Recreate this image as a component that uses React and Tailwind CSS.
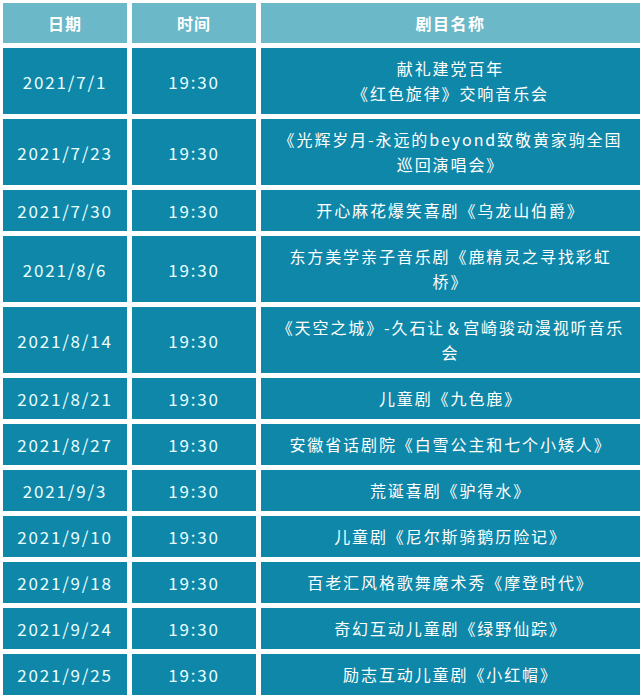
const rows = [
  { date: '2021/7/1', title: ['献礼建党百年', '《红色旋律》交响音乐会'] },
  { date: '2021/7/23', title: ['《光辉岁月-永远的beyond致敬黄家驹全国', '巡回演唱会》'] },
  { date: '2021/7/30', title: ['开心麻花爆笑喜剧《乌龙山伯爵》'] },
  { date: '2021/8/6', title: ['东方美学亲子音乐剧《鹿精灵之寻找彩虹', '桥》'] },
  { date: '2021/8/14', title: ['《天空之城》-久石让＆宫崎骏动漫视听音乐', '会'] },
  { date: '2021/8/21', title: ['儿童剧《九色鹿》'] },
  { date: '2021/8/27', title: ['安徽省话剧院《白雪公主和七个小矮人》'] },
  { date: '2021/9/3', title: ['荒诞喜剧《驴得水》'] },
  { date: '2021/9/10', title: ['儿童剧《尼尔斯骑鹅历险记》'] },
  { date: '2021/9/18', title: ['百老汇风格歌舞魔术秀《摩登时代》'] },
  { date: '2021/9/24', title: ['奇幻互动儿童剧《绿野仙踪》'] },
  { date: '2021/9/25', title: ['励志互动儿童剧《小红帽》'] },
];

const font = { fontFamily: '"Microsoft YaHei", "Noto Sans CJK SC", sans-serif' };

export default function App() {
  return (
    <div className="w-[644px] h-[699px] bg-white pt-[3px] pl-[3px] pr-[4px] pb-[4px]" style={font}>
      <div className="grid grid-cols-[124px_124px_379px] gap-[5px] text-[16px] tracking-[1px] leading-[25px] text-white text-center">
        <div className="h-[40px] bg-[#6bb8c8] font-bold flex items-center justify-center">日期</div>
        <div className="h-[40px] bg-[#6bb8c8] font-bold flex items-center justify-center">时间</div>
        <div className="h-[40px] bg-[#6bb8c8] font-bold flex items-center justify-center tracking-[1.5px]">剧目名称</div>
        {rows.map((r) => {
          const h = r.title.length > 1 ? 'h-[66px]' : 'h-[41px]';
          return [
            <div key={r.date + 'd'} className={`${h} bg-[#0f87a8] flex items-center justify-center text-[#eaffff] text-[17px] tracking-[1.8px]`}>
              {r.date}
            </div>,
            <div key={r.date + 't'} className={`${h} bg-[#0f87a8] flex items-center justify-center text-[#eaffff] text-[17px] tracking-[1.8px]`}>
              19:30
            </div>,
            <div key={r.date + 'n'} className={`${h} bg-[#0f87a8] flex flex-col items-center justify-center tracking-[1.9px] whitespace-nowrap`}>
              {r.title.map((l) => (
                <span key={l}>{l}</span>
              ))}
            </div>,
          ];
        })}
      </div>
    </div>
  );
}
